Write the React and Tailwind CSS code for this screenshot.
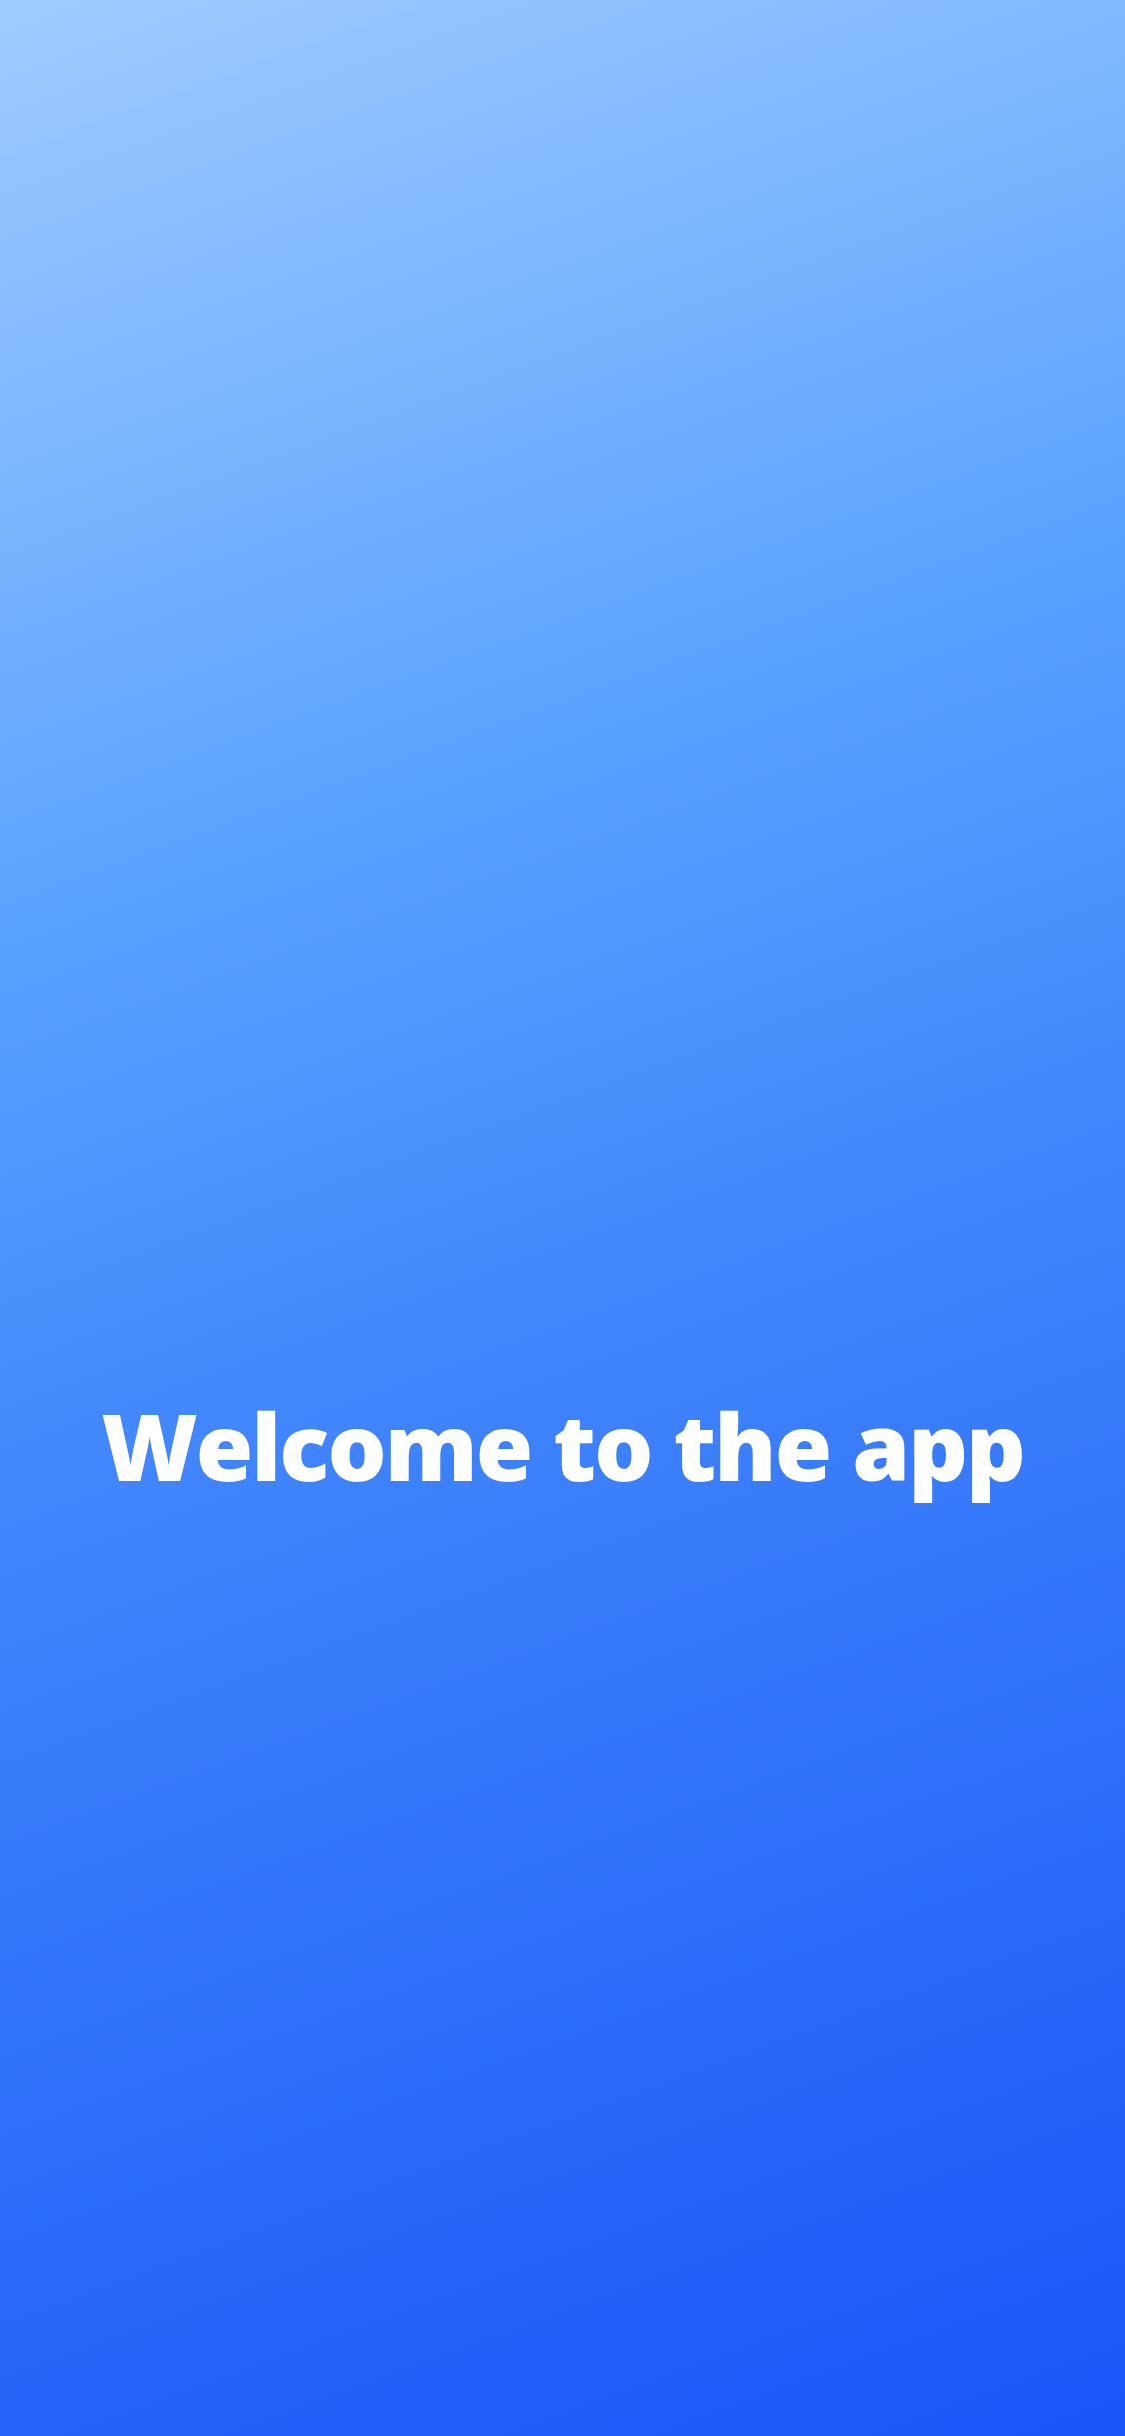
export default function App() {
  return (
    <div className="w-[1125px] h-[2436px] bg-[linear-gradient(160deg,#a0cbff_0%,#5aa2ff_33%,#3f84fb_55%,#1a54f8_100%)] flex flex-col items-center pt-[1380px]">
      <h1 className="text-white text-[93px] leading-[130px] font-extrabold tracking-[-2px]" style={{ fontFamily: '"Open Sans", "Liberation Sans", sans-serif' }}>
        Welcome to the app
      </h1>
    </div>
  );
}
